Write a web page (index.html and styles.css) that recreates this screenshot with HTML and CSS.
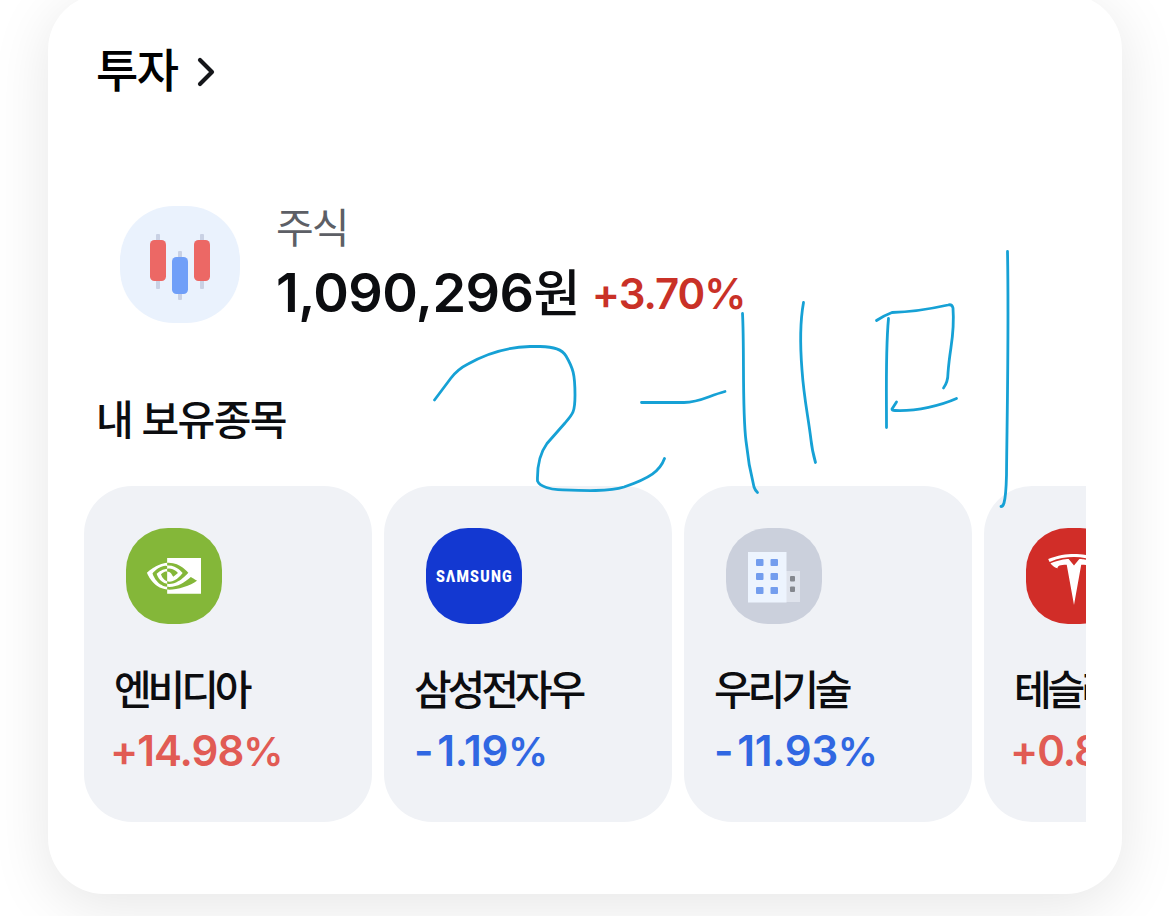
FILE: index.html
```html
<!DOCTYPE html>
<html lang="ko">
<head>
    <meta charset="UTF-8">
    <meta name="viewport" content="width=device-width, initial-scale=1.0">
    <title>투자</title>
    <link rel="stylesheet" href="styles.css">
</head>
<body>
    <div class="card">
        <div class="card-header">
            <h1>투자</h1>
            <svg class="chevron" width="20" height="32" viewBox="0 0 20 32">
                <path d="M3 4 L15 16 L3 28" />
            </svg>
        </div>

        <div class="summary">
            <div class="summary-icon">
                <svg width="120" height="117" viewBox="0 0 120 117">
                    <g fill="#c9d1e4">
                        <rect x="36" y="28" width="4" height="55" rx="1" />
                        <rect x="58" y="45" width="4" height="49" rx="1" />
                        <rect x="80" y="28" width="4" height="55" rx="1" />
                    </g>
                    <rect x="30" y="34" width="16" height="41" rx="4.5" fill="#ec6865" />
                    <rect x="52" y="51" width="16" height="37" rx="4.5" fill="#709ff8" />
                    <rect x="74" y="34" width="16" height="41" rx="4.5" fill="#ec6865" />
                </svg>
            </div>
            <div class="summary-text">
                <div class="summary-label">주식</div>
                <div class="summary-row">
                    <span class="amount">1,090,296<span class="won">원</span></span>
                    <span class="rate">+3.70%</span>
                </div>
            </div>
        </div>

        <h2>내 보유종목</h2>

        <div class="stocks">
            <div class="stock">
                <div class="logo nvidia">
                    <svg width="96" height="96" viewBox="0 0 96 96">
                        <path transform="translate(21 20.9) scale(2.25)" fill="#fff" d="M8.948 8.798v-1.43a6.7 6.7 0 0 1 .424-.018c3.922-.124 6.493 3.374 6.493 3.374s-2.774 3.851-5.75 3.851c-.398 0-.787-.062-1.158-.185v-4.346c1.528.185 1.837.857 2.747 2.385l2.04-1.714s-1.492-1.952-4-1.952a6.016 6.016 0 0 0-.796.035m0-4.735v2.138l.424-.027c5.45-.185 9.01 4.47 9.01 4.47s-4.08 4.964-8.33 4.964c-.37 0-.733-.035-1.095-.097v1.325c.3.035.61.062.91.062 3.957 0 6.82-2.023 9.593-4.408.459.371 2.34 1.263 2.73 1.652-2.633 2.208-8.772 3.984-12.253 3.984-.335 0-.653-.018-.971-.053v1.864H24V4.063zm0 10.326v1.131c-3.657-.654-4.673-4.46-4.673-4.46s1.758-1.944 4.673-2.262v1.237H8.94c-1.528-.186-2.73 1.245-2.73 1.245s.68 2.412 2.739 3.11M2.456 10.9s2.164-3.197 6.5-3.533V6.201C4.153 6.59 0 10.653 0 10.653s2.35 6.802 8.948 7.42v-1.237c-4.84-.6-6.492-5.936-6.492-5.936z" />
                    </svg>
                </div>
                <div class="name">엔비디아</div>
                <div class="change up">+14.98<span class="percent">%</span></div>
            </div>
            <div class="stock">
                <div class="logo samsung">
                    <svg width="96" height="96" viewBox="0 0 96 96">
                        <text class="samsung-text" x="10" y="54" textLength="77" lengthAdjust="spacingAndGlyphs">SΛMSUNG</text>
                    </svg>
                </div>
                <div class="name">삼성전자우</div>
                <div class="change down"><span class="minus">-</span>1.19<span class="percent">%</span></div>
            </div>
            <div class="stock">
                <div class="logo building">
                    <svg width="96" height="96" viewBox="0 0 96 96">
                        <rect x="60" y="43" width="14" height="31" fill="#dfe3ec" />
                        <rect x="22" y="24" width="38.5" height="50.5" fill="#edf4fe" />
                        <g fill="#739dee">
                            <rect x="30" y="31" width="7.5" height="7" rx="1" />
                            <rect x="44.5" y="31" width="7.5" height="7" rx="1" />
                            <rect x="30" y="45" width="7.5" height="7" rx="1" />
                            <rect x="44.5" y="45" width="7.5" height="7" rx="1" />
                            <rect x="30" y="59" width="7.5" height="7" rx="1" />
                            <rect x="44.5" y="59" width="7.5" height="7" rx="1" />
                        </g>
                        <rect x="64" y="48" width="5" height="5.5" rx="1" fill="#84878e" />
                        <rect x="64" y="58.5" width="5" height="5.5" rx="1" fill="#84878e" />
                    </svg>
                </div>
                <div class="name">우리기술</div>
                <div class="change down"><span class="minus">-</span>11.93<span class="percent">%</span></div>
            </div>
            <div class="stock">
                <div class="logo tesla">
                    <svg width="96" height="96" viewBox="0 0 96 96">
                        <path transform="translate(22.2 26) scale(2.15 2.13)" fill="#fff" d="M12 5.362l2.475-3.026s4.245.09 8.471 2.054c-1.082 1.636-3.231 2.438-3.231 2.438-.146-1.439-1.154-1.79-4.354-1.79L12 24 8.619 5.034c-3.18 0-4.188.354-4.335 1.792 0 0-2.146-.795-3.229-2.43C5.28 2.431 9.525 2.34 9.525 2.34L12 5.362l-.004.002H12v-.002zm0-3.899c3.415-.03 7.326.528 11.328 2.28.535-.968.672-1.395.672-1.395C19.625.612 15.528.015 12 0 8.472.015 4.375.61 0 2.349c0 0 .195.525.672 1.396C4.674 1.989 8.585 1.435 12 1.46v.003z" />
                    </svg>
                </div>
                <div class="name">테슬라</div>
                <div class="change up">+0.8<span class="percent">%</span></div>
            </div>
        </div>
    </div>

    <!-- Pen strokes over the card -->
    <svg class="drawing" width="1169" height="916" viewBox="0 0 1169 916">
        <path d="M434.5 400 L451 378 Q458 369 468 364 C491 351 510 347 530 346.500 H540 C554 347 562 349 566 356 C573 368 575 374 575 395 C575 412 573 414 565 423 L547 443.500 C540 453 537 464 537.500 481 C540 487 552 489.500 558 489.700 C580 490.500 608 492 624 487 C650 478 660 471 664.500 458.500" />
        <path d="M641.500 402.500 H684 C700 402.500 708 396 725 391.500" />
        <path d="M742.500 313.500 C744.500 350 742 410 746 441 C748 461 751 475 754 487 Q755 490 757.500 492.500" />
        <path d="M803.500 302.500 C800 322 800 345 802 370 C804 399 808 415 811 440 Q812 450 815.500 462.500" />
        <path d="M876.500 320.500 Q884 315.500 892 312.500 C915 312 930 309 948 305 Q952 304 953 308 C955 336 950 345 948 373 Q948 382 943.500 388" />
        <path d="M888.500 318.500 C885.500 350 886.500 390 886.500 427.500" />
        <path d="M896.500 402 L892 409 Q892 410.500 895 410.500 C917 411.500 942 405 956.500 398.500" />
        <path d="M1007.500 251.500 C1009 330 1007 420 1006.500 475 Q1006 496 1004 503 Q1003 506.500 1001 506.500" />
    </svg>
</body>
</html>
```
FILE: styles.css
```css
* {
    box-sizing: border-box;
}

body {
    margin: 0;
    height: 916px;
    overflow: hidden;
    background-color: #ffffff;
    font-family: Inter, "Noto Sans CJK KR", sans-serif;
    color: #0c0d10;
}

.card {
    width: 1074px;
    height: 900px;
    margin: -6px 0 0 48px;
    padding: 46px 36px 0;
    background-color: #ffffff;
    border-radius: 56px;
    box-shadow: 0 12px 60px rgba(0, 0, 0, 0.1);
}

.card-header {
    display: flex;
    align-items: center;
    gap: 19px;
    height: 60px;
    padding-left: 12px;
}

h1 {
    margin: 0;
    font-size: 46px;
    line-height: 58px;
    font-weight: 500;
    letter-spacing: -1.5px;
    color: #000000;
}

.chevron {
    margin-top: 3px;
}

.chevron path {
    fill: none;
    stroke: #15161a;
    stroke-width: 4.2;
    stroke-linecap: round;
    stroke-linejoin: round;
}

.summary {
    display: flex;
    align-items: center;
    gap: 36px;
    height: 120px;
    margin-top: 104px;
    padding-left: 36px;
}

.summary-icon {
    width: 120px;
    height: 117px;
    border-radius: 54px;
    background-color: #eaf2fd;
}

.summary-label {
    height: 48px;
    font-size: 41px;
    line-height: 48px;
    letter-spacing: -2px;
    color: #5d5f66;
}

.summary-row {
    display: flex;
    gap: 12px;
    height: 72px;
    white-space: nowrap;
}

.amount {
    font-size: 54px;
    line-height: 81px;
    font-weight: 600;
    letter-spacing: -0.6px;
}

.won {
    font-weight: 500;
    font-size: 51px;
}

.rate {
    font-size: 42px;
    line-height: 84px;
    font-weight: 600;
    letter-spacing: -1px;
    color: #c93127;
}

h2 {
    height: 60px;
    margin: 66px 0 0 12px;
    font-size: 41px;
    line-height: 60px;
    font-weight: 500;
    letter-spacing: -1.6px;
}

.stocks {
    display: flex;
    gap: 12px;
    margin-top: 36px;
    overflow: hidden;
}

.stock {
    flex: 0 0 288px;
    height: 336px;
    padding: 42px 30px 0;
    border-radius: 48px;
    background-color: #f0f2f6;
    white-space: nowrap;
}

.logo {
    width: 96px;
    height: 96px;
    margin-left: 12px;
    border-radius: 42px;
    overflow: hidden;
}

.nvidia {
    background-color: #84b739;
}

.samsung {
    background-color: #1338d1;
}

.building {
    background-color: #cbd0dc;
}

.tesla {
    background-color: #d12d28;
}

.samsung-text {
    font-family: Roboto, sans-serif;
    font-size: 17px;
    font-weight: 900;
    letter-spacing: 1.5px;
    fill: #ffffff;
}

.name {
    height: 60px;
    margin-top: 36px;
    font-size: 41px;
    line-height: 60px;
    font-weight: 500;
    letter-spacing: -4.1px;
}

.change {
    height: 60px;
    font-size: 42px;
    line-height: 61px;
    font-weight: 600;
}

.minus {
    margin-right: 4px;
}

.percent {
    font-size: 40px;
}

.up {
    margin-left: -4px;
    letter-spacing: -1px;
    color: #e15b54;
}

.down {
    letter-spacing: -0.3px;
    color: #3067e2;
}

.drawing {
    position: absolute;
    top: 0;
    left: 0;
    pointer-events: none;
}

.drawing path {
    fill: none;
    stroke: #16a1d5;
    stroke-width: 2.8;
    stroke-linecap: round;
    stroke-linejoin: round;
}
```
